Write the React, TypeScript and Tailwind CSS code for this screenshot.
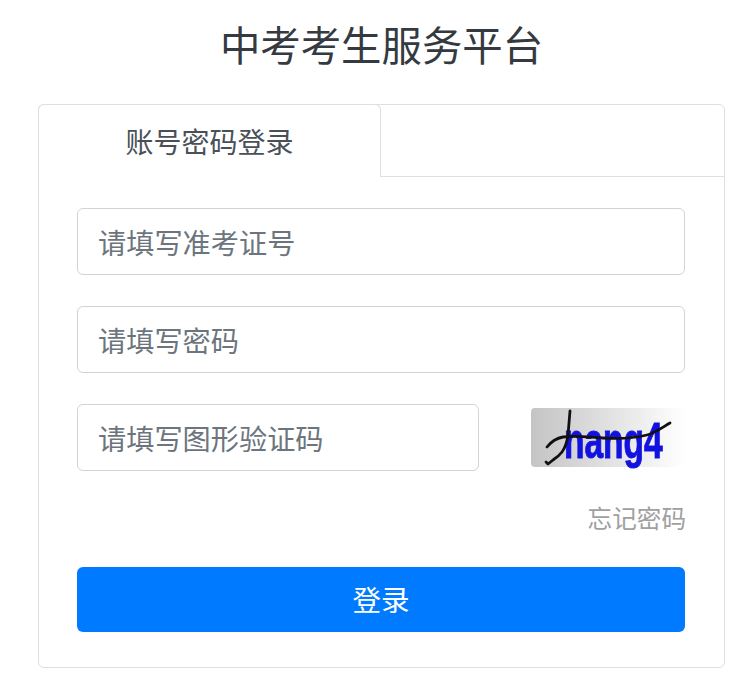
const inputClass =
  'h-[67px] rounded-[6px] border border-[#ced4da] bg-white pl-[20px] pt-[1px] flex items-center text-[28.2px] text-[#6c757d]'

function Captcha() {
  return (
    <div className="relative ml-auto mt-[4px] h-[59px] w-[154px] rounded-[4px] bg-gradient-to-r from-[#c4c4c4] to-white">
      <span className="absolute left-[33px] top-[5px] origin-left scale-x-[0.67] text-[50px] font-bold leading-[56px] text-[#1212e0] blur-[0.5px] [-webkit-text-stroke:1px_#1212e0] [font-family:'Liberation_Sans',sans-serif]">
        nang4
      </span>
      <svg className="absolute inset-0" width="154" height="59" viewBox="0 0 154 59" fill="none" stroke="#111" strokeLinecap="round" strokeLinejoin="round">
        <path d="M16 39 C20 34 26 30 32 29 C44 27 56 29 72 30 C88 31 104 30 116 27 C124 25 132 19 139 15" strokeWidth="2.8" />
        <path d="M39 3 L37 27 C36 34 34 40 31 44 C28 48 25 50 22 52 L17 56 L15 54" strokeWidth="2.8" />
      </svg>
    </div>
  )
}

export default function App() {
  return (
    <div className="h-[694px] w-[742px] overflow-hidden bg-white [font-family:'Noto_Sans_CJK_SC','Liberation_Sans',sans-serif]">
      <h1 className="h-[104px] w-[763px] pt-[14px] text-center text-[40.4px] font-normal leading-[60px] text-[#343a40]">
        中考考生服务平台
      </h1>
      <div className="ml-[38px] h-[564px] w-[687px] rounded-[6px] border border-[#dfdfdf] bg-white">
        <div className="flex h-[72px]">
          <div className="-ml-px -mt-px flex h-[73px] w-[343px] items-center justify-center rounded-t-[6px] border border-b-0 border-[#dfdfdf] bg-white text-[28px] text-[#495057]">
            账号密码登录
          </div>
          <div className="flex-1 border-b border-[#dfdfdf]" />
        </div>
        <div className="flex flex-col pl-[38px] pr-[39px] pt-[31px]">
          <div className={inputClass}>请填写准考证号</div>
          <div className={`${inputClass} mt-[31px]`}>请填写密码</div>
          <div className="mt-[31px] flex h-[67px]">
            <div className={`${inputClass} w-[402px]`}>请填写图形验证码</div>
            <Captcha />
          </div>
          <div className="mt-[28px] -mr-px h-[38px] text-right text-[24.6px] leading-[36px] text-[#a0a0a0]">忘记密码</div>
          <button className="mt-[30px] h-[65px] rounded-[6px] bg-[#007bff] text-[28.5px] text-white">登录</button>
        </div>
      </div>
    </div>
  )
}
